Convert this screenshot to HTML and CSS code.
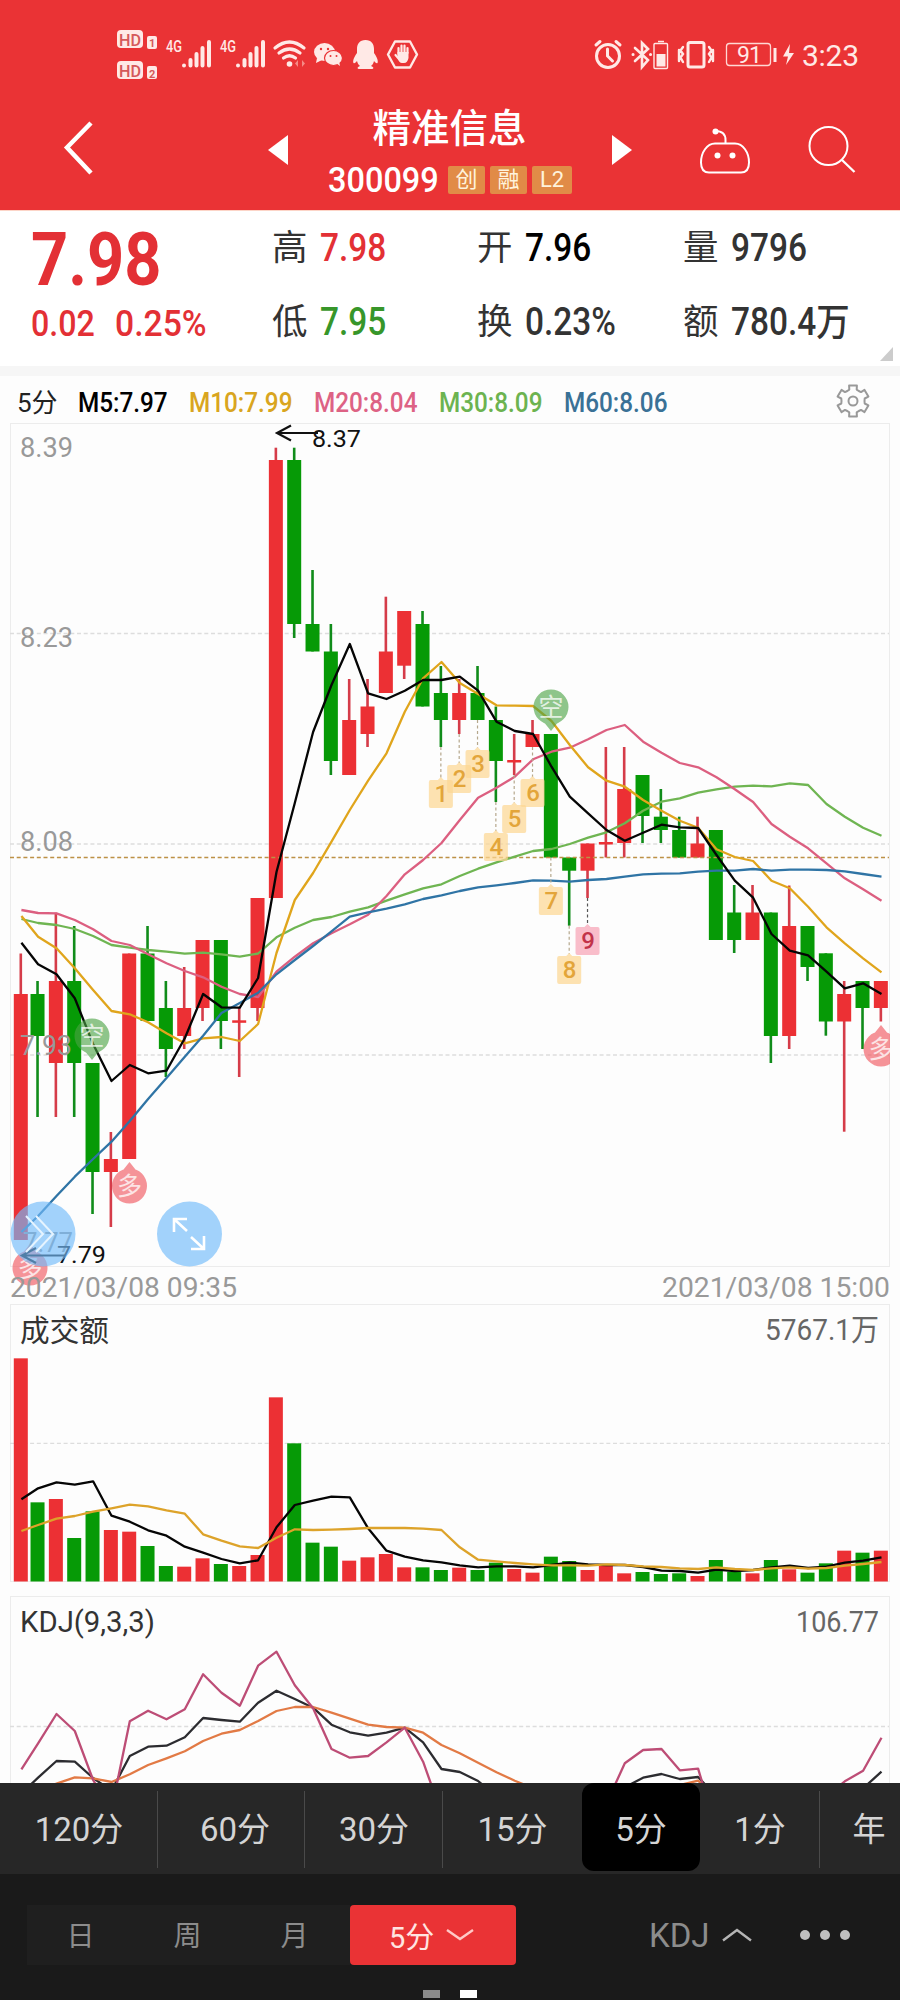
FILE: index.html
```html
<!DOCTYPE html>
<html lang="zh-CN">
<head>
    <meta charset="UTF-8">
    <meta name="viewport" content="width=device-width, initial-scale=1.0">
    <title>精准信息 300099</title>

    <link rel="stylesheet" href="styles.css">
</head>
<body>

    <div class="header">
        <div class="status">
            <svg class="status-left" width="306" height="60" viewBox="114 25 306 60">
                <g fill="#ffe9e6">
                    <rect x="117" y="30" width="26" height="18" rx="4"/>
                    <rect x="147" y="36" width="10" height="13" rx="2"/>
                    <rect x="117" y="61" width="26" height="18" rx="4"/>
                    <rect x="147" y="66" width="10" height="13" rx="2"/>
                </g>
                <g class="hd-text">
                    <text x="119" y="45.500" textLength="22" lengthAdjust="spacingAndGlyphs">HD</text>
                    <text x="119" y="76.500" textLength="22" lengthAdjust="spacingAndGlyphs">HD</text>
                    <text class="hd-num" x="149" y="47">1</text>
                    <text class="hd-num" x="149" y="77.500">2</text>
                </g>
                <text class="net" x="166" y="52" textLength="16" lengthAdjust="spacingAndGlyphs">4G</text>
                <text class="net" x="220" y="52" textLength="16" lengthAdjust="spacingAndGlyphs">4G</text>
                <g stroke="#ffe9e6" stroke-width="4" stroke-linecap="round">
                    <path d="M184 65.500v.1M190.500 60v5.500M196.500 54v11.500M202.500 48v17.500M209 42v23.500"/>
                    <path d="M238 65.500v.1M244.500 60v5.500M250.500 54v11.500M256.500 48v17.500M263 42v23.500"/>
                </g>
                <g fill="none" stroke="#ffe9e6" stroke-width="3.200" stroke-linecap="round">
                    <path d="M275 48q14.500-12 29 0M279 53q10.500-8 21 0M283.500 58q6-4.500 12 0"/>
                </g>
                <circle cx="289.500" cy="64" r="2.800" fill="#ffe9e6"/>
                <path d="M298 60l-3 3.500 3 3.500zM302 60l3 3.500-3 3.500z" fill="#f58a86"/>
                <g fill="#ffe9e6">
                    <ellipse cx="324.500" cy="52" rx="10.500" ry="9"/>
                    <path d="M317 58l-1 5 6-3z"/>
                    <ellipse cx="333.500" cy="58" rx="9" ry="7.500" stroke="#ea3335" stroke-width="1.200"/>
                    <path d="M336 63l4 3-1-5z"/>
                </g>
                <g fill="#ea3335">
                    <circle cx="321" cy="49" r="1.200"/><circle cx="328" cy="49" r="1.200"/>
                    <circle cx="330.500" cy="56" r="1"/><circle cx="336.500" cy="56" r="1"/>
                </g>
                <path d="M365.500 40c-6 0-8.500 4-8.500 9v4c-3 4-4.500 8-3.500 10 1 1 2.500-1 3.500-2 .5 2 1.500 4 3 5-3 1-3.500 3 0 3h11c3.500 0 3-2 0-3 1.500-1 2.500-3 3-5 1 1 2.500 3 3.500 2 1-2-.5-6-3.500-10v-4c0-5-2.500-9-8.500-9z" fill="#ffe9e6"/>
                <path d="M395 41.500h15l7 13-7 13h-15l-7-13z" fill="none" stroke="#ffe9e6" stroke-width="2.400" stroke-linejoin="round"/>
                <path d="M398.500 54v-6M401.500 52v-6.500M404.500 52v-6.500M407.500 53v-5M395.500 55l3.500 4" stroke="#ffe9e6" stroke-width="2.200" stroke-linecap="round"/>
                <path d="M397.500 52h11v6q-1 5-4.500 5h-2q-3 0-4.500-5z" fill="#ffe9e6"/>
            </svg>
            <svg class="status-right" width="272" height="60" viewBox="590 25 272 60">
                <g fill="none" stroke="#ffe9e6" stroke-width="3" stroke-linecap="round">
                    <circle cx="608" cy="56" r="11.500"/>
                    <path d="M607.500 49v7l5 5M596 45l4-3.500M620 45l-4-3.500"/>
                    <path d="M635 48l13 12-6 7V43l6 6-13 12" stroke-width="2.600"/>
                    <path d="M633 54.500h.1M650.500 54.500h.1"/>
                    <rect x="688" y="42.500" width="16" height="24.500" rx="2"/>
                    <path d="M683 47l-2.500 3.500 2.500 3.500-2.500 3.500 2.500 4.500M679 50v11M709 47l2.500 3.500-2.500 3.500 2.500 3.500-2.500 4.500M713 50v11" stroke-width="2.400"/>
                </g>
                <path d="M658 41.500h6" stroke="#ffe9e6" stroke-width="1.500"/>
                <rect x="654" y="43.500" width="13.500" height="25" rx="1" fill="none" stroke="#ffe9e6" stroke-width="1.400"/>
                <rect x="656.500" y="54" width="9" height="12.500" fill="#ffe9e6"/>
                <rect x="726.500" y="43.500" width="44" height="22" rx="3" fill="none" stroke="#ffd8d4" stroke-width="1.300"/>
                <path d="M775 48v14" stroke="#ffe9e6" stroke-width="3"/>
                <text class="batt" x="737" y="62.500">91</text>
                <path d="M790 44l-7 12.500h5l-2 8.500 8-12h-5z" fill="#ffe9e6"/>
                <text class="clock" x="802" y="65.500" textLength="57">3:23</text>
            </svg>
        </div>

        <div class="nav">
            <svg class="back" width="32" height="56" viewBox="0 0 32 56"><path d="M28 3L4 27.500 28 53" fill="none" stroke="#fff" stroke-width="4.500"/></svg>
            <svg class="prev" width="20" height="30" viewBox="0 0 20 30"><path d="M20 0v30L0 15z" fill="#fff"/></svg>
            <div class="title">
                <div class="name">精准信息</div>
                <div class="code-row">
                    <span class="code"><b>300099</b></span>
                    <span class="tag">创</span>
                    <span class="tag">融</span>
                    <span class="tag tag-l2">L2</span>
                </div>
            </div>
            <svg class="next" width="20" height="30" viewBox="0 0 20 30"><path d="M0 0v30l20-15z" fill="#fff"/></svg>
            <svg class="robot" width="54" height="48" viewBox="698 126 54 48">
                <path d="M715 143.500h20c8 0 14 9 14 19 0 7-3 10-8 10h-32c-5 0-8-3-8-10 0-10 6-19 14-19zM725.500 143v-3c0-6-4-9-10-9" fill="none" stroke="#fff" stroke-width="2"/>
                <circle cx="715.500" cy="131.500" r="3" fill="#fff"/>
                <circle cx="717.500" cy="155.500" r="3" fill="#fff"/>
                <circle cx="732.500" cy="155.500" r="3" fill="#fff"/>
            </svg>
            <svg class="search" width="50" height="50" viewBox="807 125 50 50">
                <circle cx="828.500" cy="146" r="19" fill="none" stroke="#fff" stroke-width="2"/>
                <path d="M842 160l12.500 12" stroke="#fff" stroke-width="2.400"/>
            </svg>
        </div>
    </div>

    <div class="quote">
        <div class="price-box">
            <div class="price"><b>7.98</b></div>
            <div class="change"><b>0.02</b><b>0.25%</b></div>
        </div>
        <div class="item"><span>高</span><b class="red">7.98</b></div>
        <div class="item"><span>开</span><b class="black">7.96</b></div>
        <div class="item"><span>量</span><b>9796</b></div>
        <div class="item"><span>低</span><b class="green">7.95</b></div>
        <div class="item"><span>换</span><b>0.23%</b></div>
        <div class="item"><span>额</span><b>780.4万</b></div>
        <svg class="corner" width="13" height="14" viewBox="0 0 13 14"><path d="M13 0v14H0z" fill="#ccc"/></svg>
    </div>

    <div class="ma-row">
        <span class="ma period">5分</span>
        <span class="ma m5"><b>M5:7.97</b></span>
        <span class="ma m10"><b>M10:7.99</b></span>
        <span class="ma m20"><b>M20:8.04</b></span>
        <span class="ma m30"><b>M30:8.09</b></span>
        <span class="ma m60"><b>M60:8.06</b></span>
        <svg class="gear" width="36" height="36" viewBox="-18 -18 36 36">
            <path id="gear" fill="none" stroke="#999" stroke-width="2" stroke-linejoin="round"/>
            <circle r="4.500" fill="none" stroke="#999" stroke-width="2"/>
        </svg>
    </div>

    <svg class="chart" id="kline" width="900" height="881" viewBox="0 423 900 881"></svg>
    <svg class="chart" id="volume" width="900" height="292" viewBox="0 1304 900 292"></svg>
    <svg class="chart" id="kdj" width="900" height="187" viewBox="0 1596 900 187"></svg>

    <div class="periods">
        <div class="p p120">120分</div>
        <div class="p p60">60分</div>
        <div class="p p30">30分</div>
        <div class="p p15">15分</div>
        <div class="p p5">5分</div>
        <div class="p p1">1分</div>
        <div class="p pyear">年</div>
    </div>

    <div class="bottom">
        <div class="segment">
            <span>日</span>
            <span>周</span>
            <span>月</span>
        </div>
        <div class="active">5分
            <svg width="30" height="14" viewBox="0 0 30 14"><path d="M2 2l13 9L28 2" fill="none" stroke="#ffc9c6" stroke-width="2.400"/></svg>
        </div>
        <div class="indicator">KDJ
            <svg width="30" height="14" viewBox="0 0 30 14"><path d="M1 12.500L15 2l14 10.500" fill="none" stroke="#b5b5b5" stroke-width="2.400"/></svg>
        </div>
        <div class="dots"><i></i><i></i><i></i></div>
        <div class="pager"><i></i><i class="on"></i></div>
    </div>

    <script src="chart.js"></script>
</body>
</html>
```

FILE: styles.css
```css
html, body {
    margin: 0;
    padding: 0;
}
body {
    width: 900px;
    height: 2000px;
    overflow: hidden;
    display: flex;
    flex-direction: column;
    background-color: #fdfdfd;
    font-family: Roboto, "Noto Sans CJK SC", sans-serif;
    color: #333;
}
svg {
    display: block;
    flex: none;
}
b {
    display: inline-block;
    font-weight: 500;
    transform-origin: left center;
    white-space: nowrap;
}

/* header */
.header {
    height: 210px;
    flex: none;
    background-color: #ea3335;
    color: white;
}
.status {
    display: flex;
    justify-content: space-between;
    padding: 25px 38px 0 114px;
    height: 60px;
}
.hd-text {
    font-size: 17px;
    font-weight: 500;
    fill: #d5595a;
}
.hd-num {
    font-size: 11px;
    font-weight: 700;
}
.net {
    font-size: 17px;
    font-weight: 500;
    fill: #ffe9e6;
}
.batt {
    font-size: 23px;
    fill: #ffe9e6;
    letter-spacing: -1px;
}
.clock {
    font-size: 30px;
    fill: #ffe9e6;
}
.nav {
    display: flex;
    align-items: flex-start;
    height: 125px;
}
.back {
    margin: 35px 0 0 63px;
}
.prev {
    margin: 50px 0 0 173px;
}
.title {
    width: 324px;
    margin-top: 19px;
}
.name {
    height: 50px;
    line-height: 50px;
    font-size: 38.500px;
    font-weight: 500;
    text-align: center;
    margin-left: -1px;
}
.code-row {
    display: flex;
    align-items: center;
    height: 56px;
    margin-top: -2px;
    padding-left: 40px;
    gap: 5px;
}
.code {
    width: 115px;
    font-size: 35.500px;
}
.code b {
    transform: scaleX(.915);
}
.tag {
    width: 37px;
    height: 28px;
    line-height: 27px;
    font-size: 22px;
    text-align: center;
    border-radius: 2px;
    background-color: #e18b47;
    color: #fff3dc;
}
.tag-l2 {
    width: 40px;
}
.next {
    margin: 50px 0 0 0;
}
.robot {
    margin: 41px 0 0 66px;
}
.search {
    margin: 40px 0 0 55px;
}

/* quote */
.quote {
    position: relative;
    display: grid;
    grid-template-columns: 241px 205px 206px 217px;
    grid-template-rows: 74px 73px;
    height: 156px;
    box-sizing: border-box;
    padding: 0 0 0 31px;
    flex: none;
    border-top: 1px solid #fcd5c8;
    background-color: white;
}
.price-box {
    grid-row: span 2;
    padding-top: 2px;
    color: #e33035;
}
.price {
    height: 86px;
    line-height: 92px;
    font-size: 75px;
}
.price b {
    font-weight: 700;
    transform: scaleX(.865);
}
.change {
    display: flex;
    height: 50px;
    line-height: 50px;
    font-size: 37px;
}
.change b {
    transform: scaleX(.87);
}
.change b:first-child {
    width: 84px;
}
.change b:last-child {
    transform: scaleX(.91);
}
.item {
    display: flex;
    align-items: center;
    font-size: 35.500px;
    line-height: 50px;
}
.item span {
    width: 48px;
}
.item b {
    font-size: 38px;
    transform: scaleX(.88);
}
.red {
    color: #e33035;
}
.green {
    color: #37962a;
}
.black {
    color: black;
}
.corner {
    position: absolute;
    right: 7px;
    bottom: 5px;
}

/* moving averages */
.ma-row {
    display: flex;
    align-items: center;
    height: 57px;
    box-sizing: border-box;
    border-top: 10px solid #f6f6f6;
    padding: 6px 0 0 17px;
    flex: none;
    font-size: 27px;
    line-height: 30px;
}
.ma b {
    transform: scaleX(.9);
}
.ma {
    flex: none;
    width: 125px;
    white-space: nowrap;
}
.period {
    width: 61px;
    font-size: 26px;
    color: #222;
}
.m5 {
    width: 111px;
    color: black;
}
.m10 {
    color: #d9a520;
}
.m20 {
    color: #dd6284;
}
.m30 {
    color: #6cb350;
}
.m60 {
    color: #3a7196;
}
.gear {
    margin: -4px 0 0 146px;
}

/* charts */
.axis {
    font-size: 27.500px;
    fill: #999;
}
.mark {
    font-size: 24px;
    fill: #111;
}
.date {
    font-size: 28.500px;
    fill: #999;
}
.sub-title {
    font-size: 29.500px;
    fill: #333;
}
.sub-value {
    font-size: 30px;
    fill: #666;
}
.signal {
    font-size: 25px;
    fill: white;
}
.count {
    font-size: 24px;
    font-weight: 500;
    fill: #e3a53a;
}
.count9 {
    fill: #c23349;
}

/* period tabs */
.periods {
    display: flex;
    height: 91px;
    flex: none;
    background-color: #272727;
    color: #d4d4d4;
    font-size: 33px;
    overflow: hidden;
}
.p {
    flex: none;
    display: flex;
    align-items: center;
    justify-content: center;
    height: 88px;
    box-sizing: border-box;
}
.p120, .p60, .p30, .p1 {
    background: linear-gradient(#4a4a4a, #4a4a4a) no-repeat right 8px / 1px 77px;
}
.p120 {
    width: 158px;
}
.p60 {
    width: 147px;
    padding-left: 7px;
}
.p30 {
    width: 138px;
}
.p15 {
    width: 139px;
}
.p5 {
    width: 118px;
    background-color: black;
    border-radius: 12px;
}
.p1 {
    width: 120px;
}
.pyear {
    width: 98px;
}

/* bottom bar */
.bottom {
    position: relative;
    display: flex;
    align-items: flex-start;
    height: 126px;
    flex: none;
    padding: 31px 0 0 27px;
    box-sizing: border-box;
    background-color: #1a1a1a;
    color: #8c8c8c;
}
.segment {
    display: flex;
    width: 323px;
    height: 60px;
    line-height: 63px;
    background-color: #1f1f1f;
    font-size: 28px;
}
.segment span {
    width: 107px;
    text-align: center;
}
.active {
    display: flex;
    align-items: center;
    gap: 11px;
    width: 166px;
    height: 60px;
    padding-left: 39px;
    box-sizing: border-box;
    border-radius: 4px;
    background-color: #ea3335;
    color: #ffe4e1;
    font-size: 29px;
}
.indicator {
    display: flex;
    align-items: center;
    gap: 12px;
    height: 60px;
    margin-left: 133px;
    font-size: 33px;
}
.dots {
    display: flex;
    gap: 10px;
    margin: 25px 0 0 48px;
}
.dots i {
    width: 10px;
    height: 10px;
    border-radius: 50%;
    background-color: #c0c0c0;
}
.pager {
    position: absolute;
    left: 423px;
    bottom: 2px;
    display: flex;
    gap: 20px;
}
.pager i {
    width: 17px;
    height: 8px;
    background-color: #8b8b8b;
}
.pager .on {
    background-color: white;
}
```

FILE: chart.js
```js
const RED = '#ec3034'
const GREEN = '#069a06'
const STEP = 18.333

const x = i => i === 0 ? 20.8 : 19.2 + STEP * i

// high, body top, body bottom, low (r = up, g = down)
const candles = [
    ['r', 953.5, 994, 1240, 1240], ['g', 981, 994, 1036, 1117], ['r', 912.7, 981, 1063, 1117],
    ['g', 926, 981, 1063, 1117], ['g', 1063, 1063, 1172, 1214], ['r', 1132, 1159, 1172, 1227],
    ['r', 953.5, 953.5, 1159, 1159], ['g', 926, 953.5, 1021, 1021], ['g', 981, 1008, 1049, 1077],
    ['r', 967, 1008, 1036, 1049], ['r', 940, 940, 1008, 1021], ['g', 940, 940, 1021, 1049],
    ['r', 1008, 1020.3, 1022.8, 1077], ['r', 898, 898, 1008, 1021], ['r', 447.7, 460, 898, 898],
    ['g', 447.7, 460, 624, 638], ['g', 570, 624, 651.5, 651.5], ['g', 624, 651.5, 761, 775],
    ['r', 679, 720, 775, 775], ['r', 679, 706.5, 734, 747], ['r', 596.7, 651.5, 693, 693],
    ['r', 611, 611, 665.7, 679], ['g', 611, 624, 706.5, 706.5], ['g', 666, 693, 720, 747],
    ['r', 679, 693, 720, 734], ['g', 666, 693, 720, 720], ['g', 706.5, 720, 761, 802],
    ['r', 734, 760, 762.5, 775], ['r', 720, 734, 747, 747], ['g', 734, 734, 857.5, 857.5],
    ['g', 857.5, 857.5, 870.7, 925.7], ['r', 843.5, 843.5, 870.7, 898], ['r', 747, 842, 844.5, 857.5],
    ['r', 747, 789, 843, 857.5], ['g', 775, 775, 816, 843], ['g', 789, 816.7, 830, 843],
    ['g', 816.7, 830, 857.5, 857.5], ['r', 816.7, 843.5, 857.5, 857.5], ['g', 830, 830, 940, 940],
    ['g', 885, 912.5, 940, 953], ['r', 885, 912.5, 940, 940], ['g', 912.5, 912.5, 1036, 1063],
    ['r', 885.5, 926, 1036, 1049], ['g', 926, 926, 967, 981], ['g', 953.3, 953.3, 1021.5, 1035.7],
    ['r', 981, 994, 1021.5, 1131.7], ['g', 981, 981, 1008, 1049], ['r', 981, 981, 1008, 1021.5]
]

const ma = {
    '#6fb552': [919, 923, 925, 929, 936, 945, 947.7, 950, 951.7, 953.7, 952.7, 954.3, 956.7, 953.5, 937.3, 927.7, 920, 917, 911.7, 907.3, 900.7, 894.3, 888.3, 884.3, 876, 868.7, 862.3, 856.7, 851, 849, 844, 837.7, 832.3, 823.3, 810.7, 801.7, 798.3, 792.7, 789.3, 786.7, 785.7, 786.3, 783.3, 785, 804, 816.7, 827.7, 835.7],
    '#dc5f80': [910, 913, 913.3, 920, 929.3, 941, 945, 954.3, 963.3, 971, 977.3, 986.7, 994, 997, 971.7, 956.7, 943.3, 933.3, 924.3, 914.7, 896, 874.3, 860, 843, 820, 797.7, 787.7, 776.7, 759.3, 751.7, 747.7, 739.3, 730, 725, 741.7, 752.7, 763, 767.3, 777.3, 789.3, 802, 824, 836.7, 848.3, 863.3, 878.3, 889.3, 900.7],
    '#e0a51c': [916, 936.7, 948.3, 968.3, 990, 1011, 1014.3, 1022.3, 1033.3, 1043.3, 1038.3, 1037, 1041, 1024, 953, 900, 873, 841.7, 810, 780.7, 753.3, 711.7, 678.3, 662, 683, 694, 705.3, 705.7, 706, 721, 745, 767.3, 780.7, 786.7, 800, 810.7, 820.7, 827.7, 849.3, 857, 861, 880.7, 888.3, 906.7, 927.3, 943.3, 958.3, 972.3],
    '#2f74a5': [1232, 1216, 1196, 1176.7, 1159, 1141.7, 1121, 1099, 1078, 1056.7, 1035.7, 1013, 1003, 992.7, 974.3, 960, 946, 931.3, 916.7, 912.3, 908.7, 904.3, 899, 895.3, 891, 887.3, 885.3, 883, 880.3, 880.7, 881.7, 880, 879, 876.7, 874.3, 873.7, 873.3, 871.7, 870.7, 870.7, 869, 870.7, 869.7, 869.7, 870, 871.3, 874, 876.7],
    '#050505': [942.7, 964.3, 974.3, 998.3, 1044, 1081, 1065, 1073.3, 1070.7, 1038.3, 994, 1007.3, 1007.7, 978, 872, 803, 732, 685, 644, 693.3, 699, 690.7, 680, 680, 676.7, 690.7, 721.7, 731, 734, 766.7, 796.7, 813.3, 830, 840.7, 832.7, 824.7, 827.3, 828, 855, 880.7, 897.7, 934, 950.7, 955.3, 971.7, 988.3, 983.3, 994]
}

// tops of the bars, in thirds of a pixel below 1290
const vol = [205, 637, 627, 744, 664, 720, 725, 768, 828, 830, 805, 822, 828, 795, 322, 460, 758, 770, 812, 802, 792, 832, 832, 840, 833, 840, 818, 837, 848, 800, 813, 840, 825, 850, 846, 852, 850, 858, 810, 845, 850, 810, 838, 848, 820, 782, 788, 782]
const volMa5 = [628, 595, 577, 584, 574, 677, 695, 721, 737, 770, 788, 807, 820, 811, 712, 645, 632, 620, 622, 715, 782, 800, 811, 817, 826, 832, 829, 829, 832, 825, 818, 823, 825, 825, 831, 842, 843, 848, 839, 843, 840, 832, 827, 834, 830, 818, 812, 802]
const volMa10 = [723, 705, 686, 678, 665, 655, 644, 649, 661, 671, 733, 752, 769, 774, 743, 718, 720, 719, 717, 714, 714, 714, 716, 720, 772, 809, 814, 819, 823, 826, 826, 827, 823, 825, 829, 831, 835, 837, 832, 837, 840, 835, 832, 836, 834, 827, 822, 816]

const kdjJ = [568, 490, 402, 453, 600, 690, 424, 392, 418, 388, 283, 338, 377, 257, 215, 316, 385, 507, 533, 528, 487, 443, 545, 700, 700, 700, 700, 700, 700, 700, 700, 700, 670, 550, 510, 507, 571, 566, 750, 750, 750, 750, 750, 750, 650, 604, 572, 473]
const kdjK = [640, 593, 543, 545, 594, 632, 528, 500, 497, 472, 414, 420, 425, 368, 332, 357, 383, 434, 457, 467, 458, 443, 487, 567, 576, 603, 650, 700, 700, 700, 700, 700, 660, 622, 593, 582, 597, 591, 650, 700, 700, 700, 700, 700, 700, 660, 625, 575]
const kdjD = [650, 630, 611, 592, 595, 606, 583, 555, 535, 514, 483, 461, 450, 423, 393, 381, 381, 398, 416, 434, 441, 443, 458, 495, 520, 548, 577, 602, 625, 650, 650, 650, 650, 650, 650, 630, 615, 602, 650, 650, 650, 650, 650, 650, 650, 650, 650, 650]

const line = (ys, color, w = 2.3) =>
    `<polyline points="${ys.map((y, i) => (x(i) + .6).toFixed(1) + ',' + y.toFixed(1)).join(' ')}" fill="none" stroke="${color}" stroke-width="${w}" stroke-linejoin="round"/>`

const dash = (y, color = '#ddd', x1 = 10) =>
    `<path d="M${x1} ${y}H889" stroke="${color}" stroke-width="1.3" stroke-dasharray="4 2.7"/>`

const text = (cls, tx, ty, w, str) =>
    `<text class="${cls}" x="${tx}" y="${ty}" textLength="${w}" lengthAdjust="spacingAndGlyphs">${str}</text>`

function frame(y1, y2) {
    return `<path d="M10.500 ${y1}V${y2}M889.500 ${y1}V${y2}M10 ${y1 + .5}H890M10 ${y2 - .5}H890" fill="none" stroke="#ececec"/>`
}

function signal(cx, cy, str) {
    const up = str === '多'
    const tip = up ? `M${cx - 8} ${cy - 14}l8-10 8 10z` : `M${cx + 8} ${cy + 14}l-8 10-8-10z`
    return `<g opacity=".62"><path d="${tip}M${cx - 17.5} ${cy}a17.500 17.500 0 1 1 35 0a17.500 17.500 0 1 1-35 0" fill="${up ? '#f0525b' : '#4aa344'}"/></g>
        <text class="signal" x="${cx}" y="${cy + 9}" text-anchor="middle" opacity=".75">${str}</text>`
}

function drawKline() {
    let s = frame(423, 1267)
    s += dash(633.5) + dash(844) + dash(1055)
    candles.forEach((c, i) => {
        const color = c[0] === 'r' ? RED : GREEN
        s += `<rect x="${x(i) - 1.3}" y="${c[1]}" width="2.600" height="${c[4] - c[1]}" fill="${c[0] === 'r' ? '#d53c49' : '#108c1a'}"/>`
        s += `<rect x="${x(i) - 7}" y="${c[2]}" width="14" height="${c[3] - c[2]}" fill="${color}"/>`
    })
    s += dash(857.5, '#bd9146')
    for (const color in ma) s += line(ma[color], color)

    // nine-count labels under the lows
    const tops = [778, 763, 748, 831, 803, 777, 885, 954, 925]
    tops.forEach((t, n) => {
        const cx = x(23 + n)
        const nine = n === 8
        s += `<path d="M${cx} ${candles[23 + n][4]}V${t}" stroke="${nine ? '#555' : '#b5a78c'}" stroke-width="1.200" stroke-dasharray="3 2.500"/>`
        s += `<path d="M${cx - 12} ${t + 4}q0-2 2-2h7l3-3 3 3h7q2 0 2 2v24q0 2-2 2h-20q-2 0-2-2z" fill="${nine ? '#f7a3b6' : '#fcd793'}" opacity=".72"/>`
        s += `<text class="count ${nine ? 'count9' : ''}" x="${cx + .5}" y="${t + 24}" text-anchor="middle">${n + 1}</text>`
    })

    s += signal(92, 1036, '空') + signal(551, 707, '空') + signal(129.5, 1186, '多') + signal(30, 1268, '多')
    s += `<clipPath id="edge"><rect x="0" y="423" width="890" height="881"/></clipPath><g clip-path="url(#edge)">${signal(881, 1049, '多')}</g>`

    s += text('axis', 20, 457, 53, '8.39') + text('axis', 20, 647, 53, '8.23') + text('axis', 20, 851, 53, '8.08')
    s += text('axis', 20, 1054.5, 52, '7.93') + text('axis', 23, 1252, 50, '7.77')
    s += text('date', 10, 1297, 227, '2021/03/08 09:35') + text('date', 662, 1297, 228, '2021/03/08 15:00')

    s += text('mark', 312, 447, 49, '8.37') + text('mark', 57, 1263, 49, '7.79')
    s += `<path d="M318 433H277M291 425.500L277 433l14 7.500M65 1255.500H22M36 1248l-14 7.500 14 7.500" fill="none" stroke="#111" stroke-width="2.200"/>`

    s += `<circle cx="43" cy="1234" r="32.500" fill="#71bcfb" opacity=".65"/><circle cx="189.500" cy="1234" r="32.500" fill="#71bcfb" opacity=".65"/>`
    s += `<path d="M26 1216l17 18-17 18M36 1216l17 18-17 18" fill="none" stroke="#e6f4ff" stroke-width="2"/>`
    s += `<path d="M187 1231l-13-12M174 1232v-13h13M191 1237l13 12M191 1249h13v-13" fill="none" stroke="white" stroke-width="2.600"/>`
    document.getElementById('kline').innerHTML = s
}

function drawVolume() {
    const y = v => 1290 + v / 3
    let s = frame(1304, 1582) + dash(1443.3)
    vol.forEach((v, i) => {
        s += `<rect x="${x(i) - 7}" y="${y(v)}" width="14" height="${1581.5 - y(v)}" fill="${candles[i][0] === 'r' ? RED : GREEN}"/>`
    })
    s += line(volMa5.map(y), '#050505') + line(volMa10.map(y), '#dda32a')
    s += text('sub-title', 20, 1341, 89, '成交额') + text('sub-value', 765, 1340, 114, '5767.1万')
    document.getElementById('volume').innerHTML = s
}

function drawKdj() {
    const y = v => 1580 + v / 3
    let s = frame(1596, 1800) + dash(1726.5)
    s += line(kdjK.map(y), '#2c2c30') + line(kdjD.map(y), '#e27a45') + line(kdjJ.map(y), '#bd4d76')
    s += text('sub-title', 20, 1632, 135, 'KDJ(9,3,3)') + text('sub-value', 796, 1632, 83, '106.77')
    document.getElementById('kdj').innerHTML = s
}

function drawGear() {
    let d = ''
    for (let k = 0; k < 6; k++) {
        [[-30, 11.5], [-18, 12], [-14, 16], [14, 16], [18, 12]].forEach(([a, r], n) => {
            const t = (k * 60 - 90 + a) * Math.PI / 180
            d += (k + n ? 'L' : 'M') + (r * Math.cos(t)).toFixed(1) + ' ' + (r * Math.sin(t)).toFixed(1)
        })
    }
    document.getElementById('gear').setAttribute('d', d + 'Z')
}

drawKline()
drawVolume()
drawKdj()
drawGear()
```
